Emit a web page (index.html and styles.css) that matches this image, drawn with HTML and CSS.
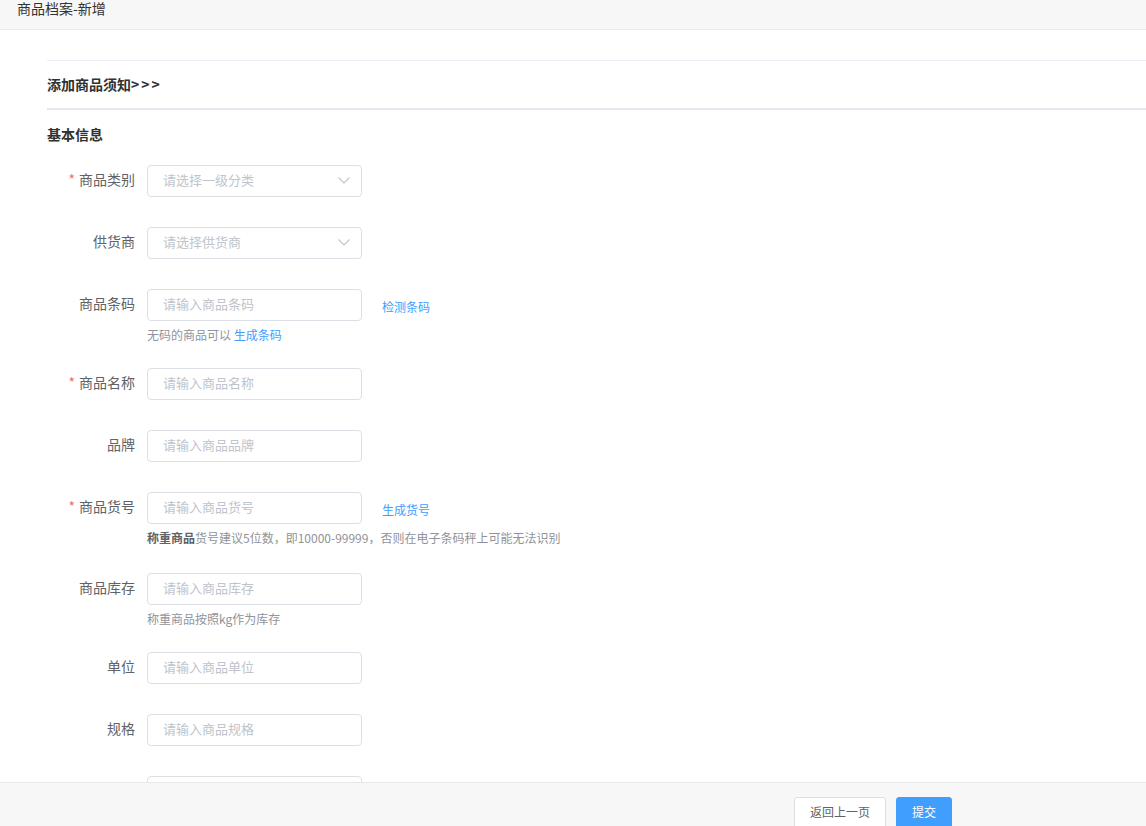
FILE: index.html
```html
<!DOCTYPE html>
<html lang="zh-CN">
<head>
<meta charset="utf-8">
<title>商品档案-新增</title>
<link rel="stylesheet" href="styles.css">
</head>
<body>
<div class="header">商品档案-新增</div>
<div class="content">
  <div class="notice">添加商品须知<span class="arrows">&gt;&gt;&gt;</span></div>
  <div class="section-title">基本信息</div>
  <div class="form">
    <div class="item">
      <label class="label"><span class="star">*</span>商品类别</label>
      <div class="control">
        <div class="select"><span class="ph">请选择一级分类</span>
          <svg class="chev" viewBox="0 0 12 7" width="12" height="7"><path d="M0.5 0.5 L6 6 L11.5 0.5" fill="none" stroke="#c0c4cc" stroke-width="1.1"/></svg>
        </div>
      </div>
    </div>
    <div class="item">
      <label class="label">供货商</label>
      <div class="control">
        <div class="select"><span class="ph">请选择供货商</span>
          <svg class="chev" viewBox="0 0 12 7" width="12" height="7"><path d="M0.5 0.5 L6 6 L11.5 0.5" fill="none" stroke="#c0c4cc" stroke-width="1.1"/></svg>
        </div>
      </div>
    </div>
    <div class="item has-help">
      <label class="label">商品条码</label>
      <div class="control">
        <input class="input" placeholder="请输入商品条码">
        <a class="link side">检测条码</a>
      </div>
      <div class="help">无码的商品可以 <a class="link">生成条码</a></div>
    </div>
    <div class="item">
      <label class="label"><span class="star">*</span>商品名称</label>
      <div class="control"><input class="input" placeholder="请输入商品名称"></div>
    </div>
    <div class="item">
      <label class="label">品牌</label>
      <div class="control"><input class="input" placeholder="请输入商品品牌"></div>
    </div>
    <div class="item has-help wide">
      <label class="label"><span class="star">*</span>商品货号</label>
      <div class="control">
        <input class="input" placeholder="请输入商品货号">
        <a class="link side">生成货号</a>
      </div>
      <div class="help"><b>称重商品</b>货号建议5位数，即10000-99999，否则在电子条码秤上可能无法识别</div>
    </div>
    <div class="item has-help">
      <label class="label">商品库存</label>
      <div class="control"><input class="input" placeholder="请输入商品库存"></div>
      <div class="help">称重商品按照kg作为库存</div>
    </div>
    <div class="item">
      <label class="label">单位</label>
      <div class="control"><input class="input" placeholder="请输入商品单位"></div>
    </div>
    <div class="item">
      <label class="label">规格</label>
      <div class="control"><input class="input" placeholder="请输入商品规格"></div>
    </div>
    <div class="item">
      <label class="label"></label>
      <div class="control"><input class="input" placeholder=""></div>
    </div>
  </div>
</div>
<div class="footer">
  <button class="btn">返回上一页</button>
  <button class="btn primary">提交</button>
</div>
</body>
</html>
```
FILE: styles.css
```css
* { box-sizing: border-box; }
html, body { margin: 0; padding: 0; }
body {
  font-family: "Noto Sans CJK SC", "Noto Sans", "Liberation Sans", sans-serif;
  color: #606266;
  background: #fff;
  height: 826px;
  overflow: hidden;
}
.header {
  height: 30px;
  background: #f7f7f7;
  border-bottom: 1px solid #ebebeb;
  padding-left: 17px;
  font-size: 14px;
  line-height: 16px;
  color: #333;
}
.content {
  padding: 30px 0 0 47px;
}
.notice {
  border-top: 1px solid #ebeef5;
  border-bottom: 2px solid #e4e7ed;
  height: 50px;
  line-height: 46px;
  font-size: 14px;
  font-weight: bold;
  color: #303133;
}
.arrows { letter-spacing: 2px; font-weight: 600; }
.section-title {
  margin-top: 14px;
  font-size: 14px;
  line-height: 20px;
  font-weight: bold;
  color: #303133;
}
.form { margin-top: 21px; }
.item {
  display: grid;
  grid-template-columns: 100px auto;
  margin-bottom: 30px;
}
.item.has-help { margin-bottom: 22px; }
.item.wide { margin-bottom: 24px; }
.label {
  padding-right: 12px;
  text-align: right;
  font-size: 14px;
  line-height: 28px;
  height: 32px;
  color: #606266;
}
.star { color: #f56c6c; margin-right: 4px; }
.control {
  display: flex;
  align-items: center;
}
.input, .select {
  width: 215px;
  height: 32px;
  border: 1px solid #dcdfe6;
  border-radius: 4px;
  padding: 0 15px 4px;
  font-family: inherit;
  font-size: 13px;
  color: #606266;
  outline: none;
  background: #fff;
}
.input::placeholder { color: #c0c4cc; }
.select {
  display: flex;
  align-items: center;
  justify-content: space-between;
  padding: 0 11px 0 15px;
}
.ph { color: #c0c4cc; font-size: 13px; line-height: 18px; margin-top: -3px; }
.chev { display: block; margin-top: -1px; }
.link {
  color: #409eff;
  font-size: 12px;
  text-decoration: none;
}
.side { margin-left: 20px; margin-top: 2px; }
.help {
  grid-column: 2;
  margin-top: 5px;
  font-size: 12px;
  line-height: 18px;
  height: 20px;
  color: #909399;
}
.help b { color: #606266; }
.footer {
  position: fixed;
  left: 0;
  right: 0;
  bottom: 0;
  height: 44px;
  background: #f7f7f7;
  border-top: 1px solid #e8e8e8;
  padding: 14px 0 0 794px;
  display: flex;
  gap: 10px;
  align-items: flex-start;
}
.btn {
  height: 32px;
  padding: 0 15px 3px;
  font-family: inherit;
  font-size: 12px;
  border-radius: 3px;
  border: 1px solid #dcdfe6;
  background: #fff;
  color: #606266;
}
.btn.primary {
  background: #409eff;
  border-color: #409eff;
  color: #fff;
}
```
